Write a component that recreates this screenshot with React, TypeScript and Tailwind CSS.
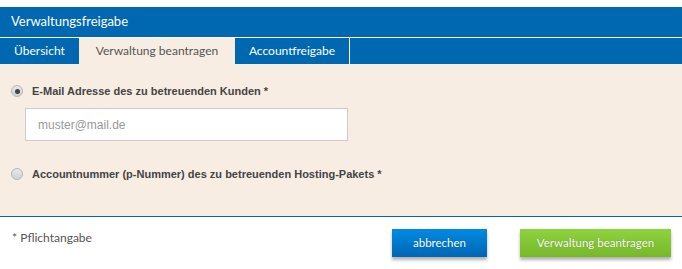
import React, { useState } from "react";

const tabs = ["Übersicht", "Verwaltung beantragen", "Accountfreigabe"];

const Radio = ({ checked }: { checked: boolean }) => (
    <span className="w-[12px] h-[12px] rounded-full border border-[#b5b5b5] bg-gradient-to-b from-[#e8e8e8] to-[#d2d2d2] flex items-center justify-center shrink-0">
        {checked && <span className="w-[5px] h-[5px] rounded-full bg-[#444]" />}
    </span>
);

export default function App() {
    const [choice, setChoice] = useState<"mail" | "account">("mail");

    return (
        <div className="w-[682px] h-[269px] bg-white pt-[7px] font-['Lato',sans-serif]">
            {/* header */}
            <div className="h-[30px] bg-[#0067b1] flex items-center pl-[11px] text-white text-[13px]">
                Verwaltungsfreigabe
            </div>
            <div className="h-px bg-white" />

            {/* tabs */}
            <div className="h-[26px] bg-[#0067b1] flex text-[12px]">
                <div className="w-[79px] flex items-center justify-center text-white">{tabs[0]}</div>
                <div className="w-[156px] flex items-center justify-center bg-[#f8ede3] text-[#555]">{tabs[1]}</div>
                <div className="w-[115px] flex items-center justify-center text-white border-r border-white">{tabs[2]}</div>
            </div>

            {/* form */}
            <div className="h-[153px] bg-[#f8ede3] border-b border-[#0067b1] pt-[20px] font-['Liberation_Sans',sans-serif] text-[11px] font-bold text-[#444]">
                <label className="flex items-center gap-[9px] pl-[11px] h-[14px]" onClick={() => setChoice("mail")}>
                    <Radio checked={choice === "mail"} />
                    <span>E-Mail Adresse des zu betreuenden Kunden *</span>
                </label>
                <div className="pl-[25px] mt-[10px]">
                    <input
                        type="text"
                        placeholder="muster@mail.de"
                        className="w-[323px] h-[33px] bg-white border border-[#cccccc] px-[12px] text-[12px] font-normal text-[#333] placeholder:text-[#999] outline-none"
                    />
                </div>
                <label className="flex items-center gap-[9px] pl-[11px] h-[14px] mt-[26px]" onClick={() => setChoice("account")}>
                    <Radio checked={choice === "account"} />
                    <span>Accountnummer (p-Nummer) des zu betreuenden Hosting-Pakets *</span>
                </label>
            </div>

            {/* footer */}
            <div className="flex items-start justify-between pl-[12px] pr-[11px] pt-[12px]">
                <span className="text-[12px] text-[#555]">* Pflichtangabe</span>
                <div className="flex gap-[33px]">
                    <button className="w-[95px] h-[28px] bg-gradient-to-b from-[#008ae3] to-[#0067b4] text-white text-[11.5px] shadow-[0_3px_3px_rgba(0,0,0,0.3)] [text-shadow:0_0_1px_rgba(0,0,0,0.3)]">
                        abbrechen
                    </button>
                    <button className="w-[151px] h-[28px] bg-gradient-to-b from-[#8ed33e] to-[#77b82a] text-white text-[11.5px] shadow-[0_3px_3px_rgba(0,0,0,0.3)] [text-shadow:0_0_1px_rgba(0,0,0,0.35)]">
                        Verwaltung beantragen
                    </button>
                </div>
            </div>
        </div>
    );
}
